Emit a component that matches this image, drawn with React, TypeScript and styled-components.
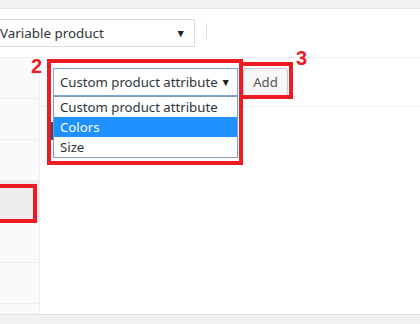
import React from "react";
import styled, { createGlobalStyle } from "styled-components";

const Global = createGlobalStyle`
  html, body { margin: 0; padding: 0; background: #f1f1f1; }
  body { font-family: "Noto Sans", "Open Sans", sans-serif; color: #32373c; }
  * { box-sizing: border-box; }
`;

const Page = styled.div`
  position: relative;
  width: 420px;
  height: 324px;
  overflow: hidden;
  background: #f1f1f1;
  padding-top: 8px;
`;

const Panel = styled.div`
  background: #fff;
  border-top: 1px solid #e5e5e5;
  border-bottom: 1px solid #e2e2e2;
  height: 307px;
  display: flex;
  flex-direction: column;
  overflow: hidden;
`;

const Header = styled.div`
  height: 49px;
  flex-shrink: 0;
  padding-top: 10px;
  border-bottom: 1px solid #eee;
  display: flex;
  align-items: flex-start;
`;

const TypeSelect = styled.div`
  margin-left: -9px;
  width: 204px;
  height: 28px;
  border: 1px solid #ddd;
  padding: 0 8px;
  display: flex;
  align-items: center;
  justify-content: space-between;
  font-size: 13.4px;
  white-space: nowrap;
  color: #2c3338;
`;

const Arrow = styled.span`
  font-size: 10.5px;
  color: #222;
`;

const Divider = styled.div`
  width: 1px;
  height: 16px;
  background: #ddd;
  margin: 4px 0 0 11px;
`;

const Body = styled.div`
  flex: 1;
  display: flex;
  min-height: 0;
  overflow: hidden;
`;

const Tabs = styled.div`
  width: 40px;
  background: #fafafa;
  border-right: 1px solid #eee;
  display: flex;
  flex-direction: column;
`;

const Tab = styled.div<{ $active?: boolean }>`
  height: 41px;
  flex-shrink: 0;
  border-bottom: 1px solid #eee;
  background: ${(p) => (p.$active ? "#eee" : "#fafafa")};
`;

const Content = styled.div`
  flex: 1;
`;

const Toolbar = styled.div`
  height: 49px;
  padding: 10px 13px;
  border-bottom: 1px solid #eee;
  display: flex;
  align-items: flex-start;
  gap: 5px;
`;

const SelectWrap = styled.div`
  position: relative;
  width: 185px;
`;

const AttrSelect = styled.div`
  height: 28px;
  border: 1px solid #7aa7d9;
  padding: 0 6px;
  display: flex;
  align-items: center;
  justify-content: space-between;
  font-size: 13.2px;
  white-space: nowrap;
  color: #2c3338;
`;

const List = styled.div`
  position: absolute;
  left: 0;
  top: 28px;
  width: 185px;
  border: 1px solid #7f9db9;
  background: #fff;
  z-index: 2;
`;

const Option = styled.div<{ $selected?: boolean }>`
  height: 20px;
  line-height: 20px;
  padding-left: 6px;
  font-size: 13.2px;
  white-space: nowrap;
  color: ${(p) => (p.$selected ? "#fff" : "#2c3338")};
  background: ${(p) => (p.$selected ? "#1e90ff" : "#fff")};
`;

const FocusEdge = styled.div`
  position: absolute;
  left: -2px;
  top: 54px;
  width: 2px;
  height: 18px;
  background: #2f4f70;
`;

const AddButton = styled.button`
  width: 45px;
  height: 28px;
  margin: 0;
  border: 1px solid #ccc;
  border-radius: 3px;
  background: #f7f7f7;
  box-shadow: 0 1px 0 #ccc;
  color: #555;
  font-family: inherit;
  font-size: 13.2px;
  padding: 0;
`;

const Mark = styled.div<{ $x: number; $y: number; $w: number; $h: number }>`
  position: absolute;
  left: ${(p) => p.$x}px;
  top: ${(p) => p.$y}px;
  width: ${(p) => p.$w}px;
  height: ${(p) => p.$h}px;
  border: 4px solid #ed1c24;
  z-index: 5;
`;

const Label = styled.div<{ $x: number; $y: number }>`
  position: absolute;
  left: ${(p) => p.$x}px;
  top: ${(p) => p.$y}px;
  font-family: "Liberation Sans", Arial, sans-serif;
  font-weight: 700;
  font-size: 20px;
  line-height: 20px;
  color: #ed1c24;
  z-index: 5;
`;

export default function App() {
  return (
    <>
      <Global />
      <Page>
        <Panel>
          <Header>
            <TypeSelect>
              <span>Variable product</span>
              <Arrow>▼</Arrow>
            </TypeSelect>
            <Divider />
          </Header>
          <Body>
            <Tabs>
              <Tab />
              <Tab />
              <Tab />
              <Tab $active />
              <Tab />
              <Tab />
              <Tab />
            </Tabs>
            <Content>
              <Toolbar>
                <SelectWrap>
                  <AttrSelect>
                    <span>Custom product attribute</span>
                    <Arrow>▼</Arrow>
                  </AttrSelect>
                  <FocusEdge />
                  <List>
                    <Option>Custom product attribute</Option>
                    <Option $selected>Colors</Option>
                    <Option>Size</Option>
                  </List>
                </SelectWrap>
                <AddButton>Add</AddButton>
              </Toolbar>
            </Content>
          </Body>
        </Panel>
        <Mark $x={47} $y={59} $w={196} $h={106} />
        <Mark $x={239} $y={62} $w={54} $h={37} />
        <Mark $x={-4} $y={184} $w={41} $h={39} />
        <Label $x={31} $y={56}>2</Label>
        <Label $x={296} $y={48}>3</Label>
      </Page>
    </>
  );
}
